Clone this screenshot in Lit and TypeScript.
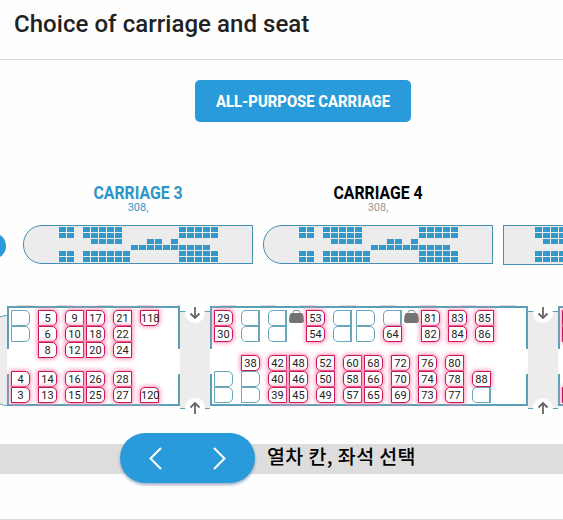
// app.ts
// Carriage and seat picker for a train booking

import { LitElement, html, svg, css, nothing } from "lit";

type Facing = "left" | "right" | "up" | "down";

// A seat label, "" for a taken seat
interface SeatColumn {
  x: number;
  facing: Facing;
  seats: string[];
  bag?: boolean;
}

interface Car {
  width: number;
  top: SeatColumn[];
  bottom: SeatColumn[];
}

const col = (x: number, facing: Facing, ...seats: string[]): SeatColumn => ({
  x,
  facing,
  seats,
});
const bag = (x: number): SeatColumn => ({ x, facing: "up", seats: [], bag: true });

const CARS: Car[] = [
  {
    width: 173,
    top: [
      col(4, "right", "", ""),
      col(31, "right", "5", "6", "8"),
      col(58, "left", "9", "10", "12"),
      col(79, "right", "17", "18", "20"),
      col(106, "left", "21", "22", "24"),
      col(133, "down", "118"),
    ],
    bottom: [
      col(4, "right", "4", "3"),
      col(31, "right", "14", "13"),
      col(58, "left", "16", "15"),
      col(79, "right", "26", "25"),
      col(106, "left", "28", "27"),
      col(133, "up", "120"),
    ],
  },
  {
    width: 318,
    top: [
      col(4, "right", "29", "30"),
      col(31, "left", "", ""),
      col(58, "left", "", ""),
      bag(79),
      col(96, "right", "53", "54"),
      col(123, "left", "", ""),
      col(146, "right", "", ""),
      col(173, "left", "", "64"),
      bag(194),
      col(211, "right", "81", "82"),
      col(238, "right", "83", "84"),
      col(265, "left", "85", "86"),
    ],
    bottom: [
      col(4, "right", "", ""),
      col(31, "right", "38", "", ""),
      col(58, "left", "42", "40", "39"),
      col(79, "right", "48", "46", "45"),
      col(106, "left", "52", "50", "49"),
      col(133, "left", "60", "58", "57"),
      col(154, "right", "68", "66", "65"),
      col(181, "right", "72", "70", "69"),
      col(208, "right", "76", "74", "73"),
      col(235, "left", "80", "78", "77"),
      col(262, "left", "88", ""),
    ],
  },
  {
    width: 120,
    top: [col(4, "right", "1", "2")],
    bottom: [col(4, "right", "3")],
  },
];

const FULL_MAP = [
  "##.#####.......#####",
  "##.#####.......#####",
  "....####...##.#.....",
  ".........##########.",
  "##.######......#####",
  "##.######......#####",
];

const END_MAP = ["######", "######", ".#####", "......", "######", "######"];

export class MiniCar extends LitElement {
  static properties = {
    map: { attribute: false },
    name: { type: String },
    active: { type: Boolean, reflect: true },
    square: { type: Boolean, reflect: true },
  };

  declare map: string[];
  declare name: string;
  declare active: boolean;
  declare square: boolean;

  constructor() {
    super();
    this.map = FULL_MAP;
    this.name = "";
    this.active = false;
    this.square = false;
  }

  static styles = css`
    :host {
      display: flex;
      flex-direction: column;
      align-items: center;
      flex: none;
      width: 230px;
      color: #000;
    }

    :host([active]) {
      color: #2f96ca;
    }

    .name {
      display: block;
      overflow: visible;
      width: 90px;
      height: 18px;
      font-size: 17.5px;
      font-weight: 700;
      fill: currentColor;
    }

    .type {
      height: 12px;
      margin-bottom: 11px;
      font-size: 11px;
      line-height: 12px;
      color: #999;
    }

    :host([active]) .type {
      color: #2f96ca;
    }

    .body {
      box-sizing: border-box;
      width: 230px;
      height: 39px;
      padding: 1px 0 0 35px;
      border: 1px solid #4190b4;
      border-radius: 19px 0 0 19px;
      background: #ececec;
    }

    :host([square]) .body {
      height: 40px;
      padding-left: 31px;
      border-radius: 0;
    }

    .row {
      display: flex;
      gap: 1px;
      height: 5px;
      margin-bottom: 1px;
    }

    .cell {
      flex: none;
      width: 7px;
    }

    .seat {
      background: #3498c9;
    }
  `;

  render() {
    return html`
      <svg class="name" viewBox="0 0 90 18">
        ${this.name
          ? svg`<text x="0.5" y="15" textLength="89" lengthAdjust="spacingAndGlyphs">${this.name}</text>`
          : nothing}
      </svg>
      <div class="type">308,</div>
      <div class="body">
        ${this.map.map(
          (row) => html`<div class="row">
            ${[...row].map(
              (c) => html`<span class="cell ${c === "#" ? "seat" : ""}"></span>`,
            )}
          </div>`,
        )}
      </div>
    `;
  }
}

export class SeatCar extends LitElement {
  static properties = {
    car: { attribute: false },
  };

  declare car: Car;

  static styles = css`
    :host {
      display: block;
      flex: none;
    }

    .car {
      display: grid;
      grid-template-rows: 1fr;
      box-sizing: border-box;
      position: relative;
      height: 100px;
      border-top: 2px solid #5c9fb6;
      border-bottom: 2px solid #5c9fb6;
      background: #fff;
    }

    /* faint roof edge */
    .car::before {
      content: "";
      position: absolute;
      top: -3px;
      left: 10px;
      right: 0;
      height: 1px;
      background: repeating-linear-gradient(90deg, #e2d6da 0 16px, transparent 16px 40px);
    }

    .wall {
      grid-area: 1 / 1;
      display: flex;
      flex-direction: column;
      justify-content: space-between;
      width: 2px;
    }

    .wall.end {
      justify-self: end;
    }

    .wall i {
      height: 41px;
      background: #5c9fb6;
    }

    .wall i + i {
      height: 30px;
    }

    .bank {
      grid-area: 1 / 1;
      display: grid;
      margin-top: 1.5px;
      align-self: start;
      justify-items: start;
      align-items: start;
    }

    .bank.bottom {
      align-self: end;
      align-items: end;
      margin: 0 0 1px;
    }

    .column {
      grid-area: 1 / 1;
      display: flex;
      flex-direction: column;
      width: 19px;
    }

    .seat {
      box-sizing: border-box;
      height: 16px;
      border: 1px solid #6aa5b9;
      background: #fff;
      color: #222;
      font-size: 11px;
      line-height: 16px;
      text-align: center;
      white-space: nowrap;
    }

    .right {
      border-radius: 0 5px 5px 0;
    }

    .left {
      border-right-width: 2px;
      border-radius: 5px 0 0 5px;
    }

    .down {
      border-radius: 0 0 5px 5px;
      line-height: 15px;
    }

    .up {
      border-radius: 5px 5px 0 0;
    }

    .down,
    .up {
      text-align: left;
    }

    .free {
      border-width: 1px;
      border-color: #c9165a;
      box-shadow: 0 0 4px 1px #ff8db5;
    }

    .bag {
      display: block;
      width: 15px;
      height: 15px;
    }
  `;

  private column(c: SeatColumn) {
    return html`<div class="column" style="margin-left:${c.x}px">
      ${c.bag
        ? html`<svg class="bag" viewBox="0 0 15 15">
            <path d="M4 4V2.500a2 2 0 0 1 2-2h3a2 2 0 0 1 2 2V4" fill="none" stroke="#888" />
            <path
              d="M3 3H12Q14 3 14.500 6L15 10.500Q15 13 12.500 13H2.500Q0 13 0 10.500L.5 6Q1 3 3 3Z"
              fill="#737373"
            />
          </svg>`
        : c.seats.map(
            (s) => html`<div class="seat ${c.facing} ${s ? "free" : ""}">${s}</div>`,
          )}
    </div>`;
  }

  render() {
    const { width, top, bottom } = this.car;
    return html`
      <div class="car" style="width:${width}px">
        <div class="wall"><i></i><i></i></div>
        <div class="wall end"><i></i><i></i></div>
        <div class="bank">${top.map((c) => this.column(c))}</div>
        <div class="bank bottom">${bottom.map((c) => this.column(c))}</div>
      </div>
    `;
  }
}

export class App extends LitElement {
  static styles = css`
    :host {
      display: flex;
      flex-direction: column;
      box-sizing: border-box;
      width: 563px;
      height: 520px;
      overflow: hidden;
      border-bottom: 1px solid #ddd;
      background: #fefefe;
      font-family: Roboto, "Liberation Sans", sans-serif;
    }

    .title {
      box-sizing: border-box;
      height: 60px;
      margin: 0;
      padding: 8px 14px 0;
      border-bottom: 1px solid #d9d9d9;
      color: #222;
      font-size: 24px;
      font-weight: 500;
      letter-spacing: 0.05px;
      line-height: 32px;
      white-space: nowrap;
    }

    .kind {
      display: flex;
      align-items: center;
      justify-content: center;
      width: 216px;
      height: 42px;
      margin: 20px 0 0 195px;
      padding: 0;
      border: 0;
      border-radius: 5px;
      background: #2a9bda;
    }

    .kind-label {
      overflow: visible;
      width: 176px;
      height: 20px;
      fill: #fff;
      font-family: Roboto, sans-serif;
      font-size: 16.5px;
      font-weight: 800;
    }

    .train {
      display: flex;
      height: 81px;
      margin-top: 62px;
    }

    .prev {
      flex: none;
      width: 26px;
      height: 26px;
      margin: 49px 17px 0 -20px;
      border-radius: 50%;
      background: #2a9bda;
    }

    mini-car {
      margin-right: 10px;
    }

    .plan {
      display: flex;
      align-items: center;
      height: 116px;
      margin-top: 33px;
    }

    .nose {
      flex: none;
      box-sizing: border-box;
      width: 17px;
      height: 91px;
      margin: 8px 0 0 -10px;
      border: 1px solid #6aa5b9;
      border-right: 0;
      border-radius: 17px 0 0 17px;
      background: #ececec;
    }

    .gangway {
      display: block;
      flex: none;
      width: 30px;
      height: 116px;
    }

    .nav {
      display: flex;
      align-items: center;
      height: 30px;
      margin-top: 30px;
      background: #ddd;
    }

    .pager {
      display: block;
      flex: none;
      width: 135px;
      height: 50px;
      margin: -2px 12px 0 120px;
      border-radius: 25px;
      background: #2a9bda;
      box-shadow: 0 2px 3px rgba(50, 80, 140, 0.45);
    }

    .caption {
      margin-bottom: 7px;
      color: #000;
      font-family: "Noto Sans CJK KR", sans-serif;
      font-size: 19.5px;
      font-weight: 500;
      letter-spacing: 0.4px;
      line-height: 28px;
      white-space: nowrap;
    }
  `;

  private gangway() {
    return html`<svg class="gangway" viewBox="0 0 30 116">
      <rect y="13" width="30" height="97" fill="#ececec" />
      <path d="M0 13.500H30M0 110.500H30" stroke="#5c9fb6" />
      <circle cx="15" cy="15" r="10" fill="#fff" />
      <circle cx="15" cy="110" r="10" fill="#fff" />
      <path
        d="M15 9V20M10.500 15.500L15 20L19.500 15.500M15 117V105M10.500 109.500L15 105L19.500 109.500"
        fill="none"
        stroke="#666"
        stroke-width="1.800"
      />
    </svg>`;
  }

  render() {
    return html`
      <h1 class="title">Choice of carriage and seat</h1>
      <button class="kind">
        <svg class="kind-label" viewBox="0 0 176 20">
          <text x="1" y="16" textLength="174" lengthAdjust="spacingAndGlyphs">ALL-PURPOSE CARRIAGE</text>
        </svg>
      </button>
      <div class="train">
        <span class="prev"></span>
        <mini-car name="CARRIAGE 3" active></mini-car>
        <mini-car name="CARRIAGE 4"></mini-car>
        <mini-car square .map=${END_MAP}></mini-car>
      </div>
      <div class="plan">
        <div class="nose"></div>
        ${CARS.map(
          (car, i) => html`${i ? this.gangway() : nothing}<seat-car .car=${car}></seat-car>`,
        )}
      </div>
      <div class="nav">
        <svg class="pager" viewBox="0 0 135 50">
          <path
            d="M41 15L30.500 25.500L41 36M94 15L104.500 25.500L94 36"
            fill="none"
            stroke="#fff"
            stroke-width="2"
          />
        </svg>
        <span class="caption">열차 칸, 좌석 선택</span>
      </div>
    `;
  }
}

customElements.define("mini-car", MiniCar);
customElements.define("seat-car", SeatCar);
customElements.define("app-root", App);
